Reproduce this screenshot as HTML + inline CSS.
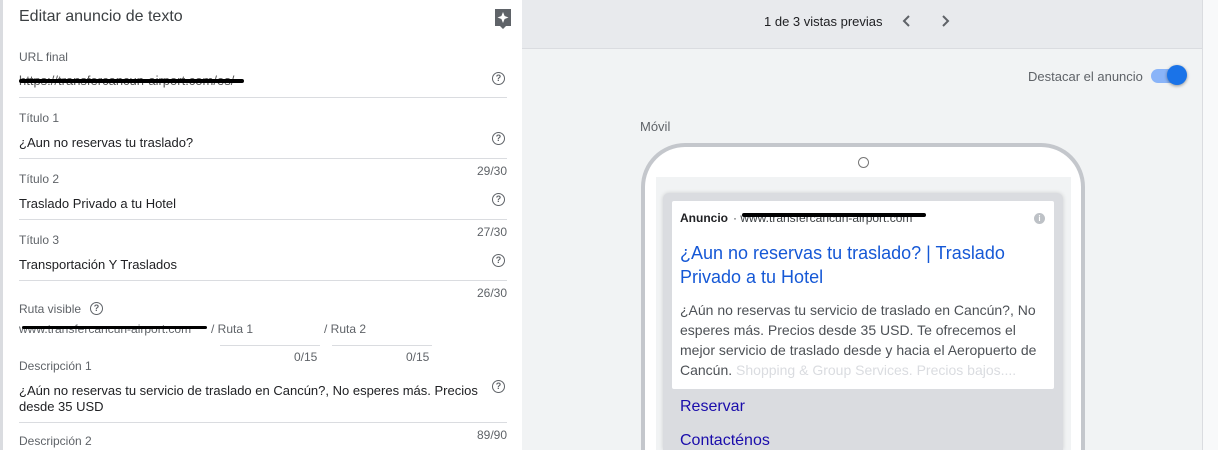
<!DOCTYPE html>
<html style="width:1218px;height:450px;overflow:hidden"><head><meta charset="utf-8"><style>
*{box-sizing:border-box;margin:0;padding:0}
body{width:1218px;height:450px;overflow:hidden;background:#f8f9fa;font-family:"Liberation Sans",Roboto,sans-serif;position:relative}
.abs{position:absolute}
.left{left:0;top:0;width:522px;height:450px;background:#fff;border-left:3px solid #dadce0}
.lbl{position:absolute;left:16px;font-size:12px;color:#5f6368}
.val{position:absolute;left:16px;font-size:13px;color:#202124}
.line{position:absolute;left:16px;width:488px;height:1px;background:#dadce0}
.cnt{position:absolute;right:15px;font-size:12px;color:#5f6368}
.q{position:absolute;left:489px;width:13px;height:13px;border:1.3px solid #5f6368;border-radius:50%;font-size:9px;line-height:11px;text-align:center;color:#5f6368;font-weight:bold}
.scr{position:absolute;height:4px;background:#000;border-radius:2px}
</style></head><body>
<div class="abs left">
  <div class="abs" style="left:16px;top:8px;font-size:16px;color:#3c4043">Editar anuncio de texto</div>
  <svg class="abs" style="left:490px;top:8px" width="20" height="22"><path d="M2 1 H18 V18 H13 L10 21 L7 18 H2 Z" fill="#5f6368"/><path d="M10 4 L11.6 8 L15.5 9.5 L11.6 11 L10 15 L8.4 11 L4.5 9.5 L8.4 8 Z" fill="#fff"/></svg>
  <div class="lbl" style="top:50px">URL final</div>
  <div class="val" style="top:73px;color:#555">https://transfercancun-airport.com/es/</div>
  <div class="scr" style="left:16px;top:79px;width:225px"></div>
  <div class="q" style="top:72px">?</div>
  <div class="line" style="top:97px"></div>
  <div class="lbl" style="top:111px">Título 1</div>
  <div class="val" style="top:135px">¿Aun no reservas tu traslado?</div>
  <div class="q" style="top:132px">?</div>
  <div class="line" style="top:158px"></div>
  <div class="cnt" style="top:164px">29/30</div>
  <div class="lbl" style="top:172px">Título 2</div>
  <div class="val" style="top:196px">Traslado Privado a tu Hotel</div>
  <div class="q" style="top:193px">?</div>
  <div class="line" style="top:219px"></div>
  <div class="cnt" style="top:225px">27/30</div>
  <div class="lbl" style="top:233px">Título 3</div>
  <div class="val" style="top:257px">Transportación Y Traslados</div>
  <div class="q" style="top:254px">?</div>
  <div class="line" style="top:280px"></div>
  <div class="cnt" style="top:286px">26/30</div>
  <div class="lbl" style="top:302px">Ruta visible</div>
  <div class="q" style="left:87px;top:302px">?</div>
  <div class="abs" style="left:16px;top:322px;font-size:12px;color:#5f6368">www.transfercancun-airport.com</div>
  <div class="abs" style="left:208px;top:322px;font-size:12px;color:#5f6368">/ Ruta 1</div>
  <div class="scr" style="left:19px;top:326px;width:185px;height:3px"></div>
  <div class="abs" style="left:321px;top:322px;font-size:12px;color:#5f6368">/ Ruta 2</div>
  <div class="abs" style="left:217px;top:345px;width:100px;height:1px;background:#dadce0"></div>
  <div class="abs" style="left:329px;top:345px;width:100px;height:1px;background:#dadce0"></div>
  <div class="abs" style="left:291px;top:350px;font-size:12px;color:#5f6368">0/15</div>
  <div class="abs" style="left:403px;top:350px;font-size:12px;color:#5f6368">0/15</div>
  <div class="lbl" style="top:359px">Descripción 1</div>
  <div class="val" style="top:383px;width:465px;line-height:16px">¿Aún no reservas tu servicio de traslado en Cancún?, No esperes más. Precios desde 35 USD</div>
  <div class="q" style="top:380px">?</div>
  <div class="line" style="top:422px"></div>
  <div class="cnt" style="top:428px">89/90</div>
  <div class="lbl" style="top:434px">Descripción 2</div>
</div>
<div class="abs" style="left:522px;top:0;width:681px;height:450px;background:#f1f3f4;border-right:1px solid #dadce0"></div>
<div class="abs" style="left:522px;top:0;width:681px;height:49px;background:#e8eaed;border-bottom:1px solid #dadce0;border-right:1px solid #dadce0"></div>
<div class="abs" style="left:764px;top:14px;font-size:13px;color:#202124">1 de 3 vistas previas</div>
<svg class="abs" style="left:898px;top:13px" width="60" height="16"><path d="M11 3 L6 8 L11 13" stroke="#5f6368" stroke-width="2" fill="none"/><path d="M45 3 L50 8 L45 13" stroke="#5f6368" stroke-width="2" fill="none"/></svg>
<div class="abs" style="left:1028px;top:69px;font-size:13px;color:#5f6368">Destacar el anuncio</div>
<div class="abs" style="left:1151px;top:69px;width:34px;height:14px;border-radius:7px;background:#8ab4f8"></div>
<div class="abs" style="left:1167px;top:65px;width:20px;height:20px;border-radius:50%;background:#1a73e8;box-shadow:0 1px 3px rgba(0,0,0,.4)"></div>
<div class="abs" style="left:640px;top:119px;font-size:13px;color:#5f6368">Móvil</div>
<div class="abs" style="left:641px;top:143px;width:444px;height:307px;border:4px solid #c4c7cc;border-bottom:none;border-radius:44px 44px 0 0;background:#fff"></div>
<div class="abs" style="left:858px;top:157px;width:11px;height:11px;border:1px solid #777;border-radius:50%"></div>
<div class="abs" style="left:656px;top:177px;width:415px;height:273px;background:#f1f3f4"></div>
<div class="abs" style="left:663px;top:193px;width:400px;height:257px;background:#dadce0;border-radius:6px 6px 0 0;box-shadow:0 0 4px rgba(0,0,0,.15)"></div>
<div class="abs" style="left:672px;top:201px;width:382px;height:188px;background:#fff;border-radius:2px"></div>
<div class="abs" style="left:680px;top:211px;font-size:12px;font-weight:bold;color:#202124">Anuncio</div>
<div class="abs" style="left:733px;top:211px;font-size:12px;color:#3c4043">· www.transfercancun-airport.com</div>
<div class="scr" style="left:742px;top:213px;width:184px;height:4px"></div>
<div class="abs" style="left:1034px;top:213px;width:11px;height:11px;border-radius:50%;background:#bdc1c6;color:#fff;font-size:8px;text-align:center;line-height:11px;font-weight:bold">i</div>
<div class="abs" style="left:680px;top:241px;width:360px;font-size:18px;line-height:24px;color:#1558d6">¿Aun no reservas tu traslado? | Traslado Privado a tu Hotel</div>
<div class="abs" style="left:680px;top:300px;width:370px;font-size:14px;line-height:20px;color:#4d5156">¿Aún no reservas tu servicio de traslado en Cancún?, No esperes más. Precios desde 35 USD. Te ofrecemos el mejor servicio de traslado desde y hacia el Aeropuerto de Cancún. <span style="color:#dadce0">Shopping &amp; Group Services. Precios bajos....</span></div>
<div class="abs" style="left:680px;top:398px;font-size:16px;color:#1a0dab">Reservar</div>
<div class="abs" style="left:680px;top:432px;font-size:16px;color:#1a0dab">Contacténos</div>
</body></html>
